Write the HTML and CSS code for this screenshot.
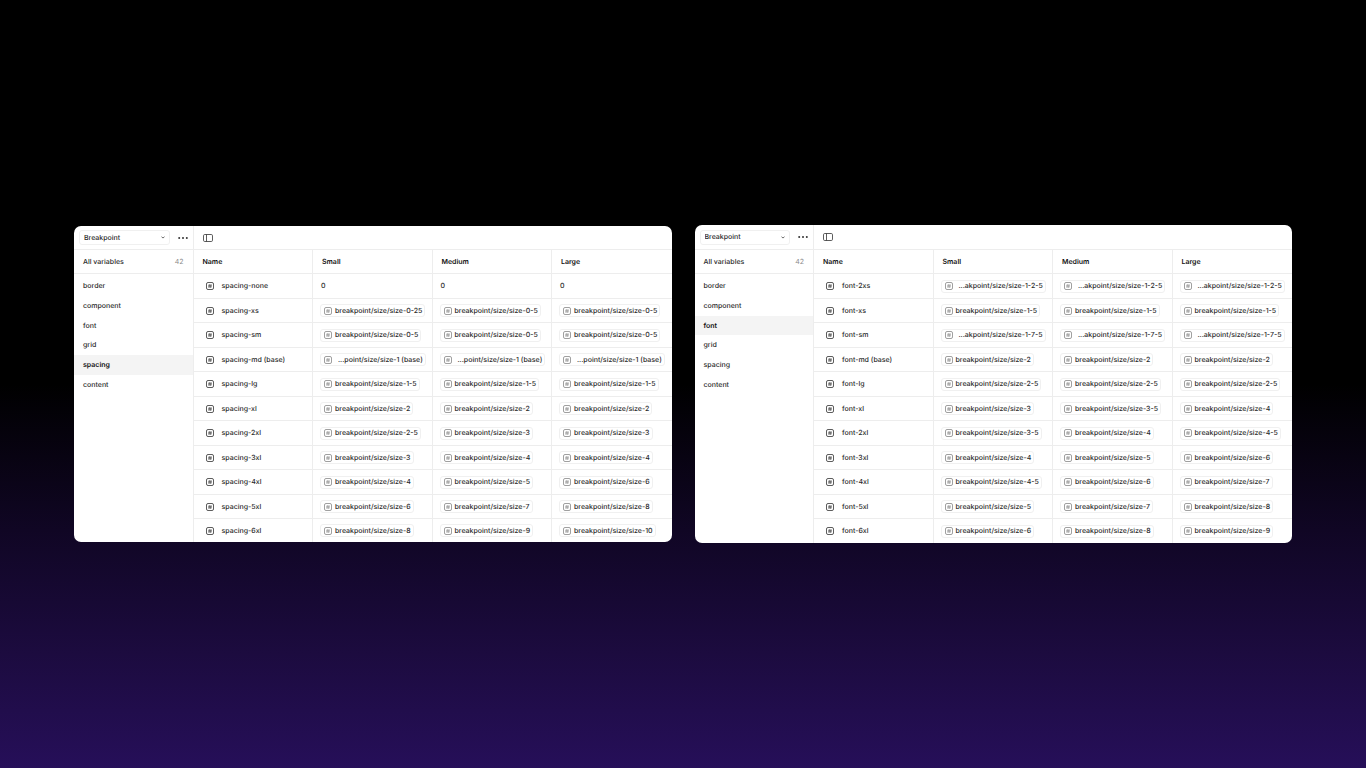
FILE: index.html
```html
<!DOCTYPE html>
<html lang="en">
<head>
    <meta charset="UTF-8">
    <meta name="viewport" content="width=device-width, initial-scale=1.0">
    <title>Breakpoint variables</title>
    <link rel="stylesheet" href="styles.css">
</head>
<body>
    <svg class="sprite" aria-hidden="true">
        <symbol id="icon-number" viewBox="0 0 16 16">
            <rect x="1" y="1" width="14" height="14" rx="3" fill="none" stroke="currentColor" stroke-width="1.6"/>
            <path d="M6.8 4.4L6 11.6M10 4.4L9.2 11.6M4.4 6.6h7.2M4.4 9.6h7.2" fill="none" stroke="currentColor" stroke-width="1.2"/>
        </symbol>
        <symbol id="icon-sidebar" viewBox="0 0 20 16">
            <rect x="1" y="1" width="18" height="14" rx="2.5" fill="none" stroke="currentColor" stroke-width="1.6"/>
            <path d="M7 1v14" stroke="currentColor" stroke-width="1.6"/>
        </symbol>
        <symbol id="icon-more" viewBox="0 0 20 4">
            <circle cx="2.4" cy="2" r="2" fill="currentColor"/>
            <circle cx="10" cy="2" r="2" fill="currentColor"/>
            <circle cx="17.6" cy="2" r="2" fill="currentColor"/>
        </symbol>
        <symbol id="icon-caret" viewBox="0 0 8 6">
            <path d="M1 1.5l3 2.5 3-2.5" fill="none" stroke="currentColor" stroke-width="1.4"/>
        </symbol>
    </svg>

    <main class="panels">
        <section class="panel" data-group="spacing">
            <aside class="sidebar">
                <div class="toolbar">
                    <div class="collection">
                        <select aria-label="Collection"><option>Breakpoint</option></select>
                        <svg class="caret"><use href="#icon-caret"/></svg>
                    </div>
                    <button class="more" aria-label="More options"><svg><use href="#icon-more"/></svg></button>
                </div>
                <a class="all" href="#">All variables <span>42</span></a>
                <nav class="groups">
                    <a href="#">border</a>
                    <a href="#">component</a>
                    <a href="#">font</a>
                    <a href="#">grid</a>
                    <a href="#" class="active">spacing</a>
                    <a href="#">content</a>
                </nav>
            </aside>
            <div class="content">
                <div class="toolbar">
                    <button class="toggle" aria-label="Toggle sidebar"><svg><use href="#icon-sidebar"/></svg></button>
                </div>
                <table>
                    <thead>
                        <tr><th>Name</th><th>Small</th><th>Medium</th><th>Large</th></tr>
                    </thead>
                    <tbody></tbody>
                </table>
            </div>
        </section>

        <section class="panel panel-tall" data-group="font">
            <aside class="sidebar">
                <div class="toolbar">
                    <div class="collection">
                        <select aria-label="Collection"><option>Breakpoint</option></select>
                        <svg class="caret"><use href="#icon-caret"/></svg>
                    </div>
                    <button class="more" aria-label="More options"><svg><use href="#icon-more"/></svg></button>
                </div>
                <a class="all" href="#">All variables <span>42</span></a>
                <nav class="groups">
                    <a href="#">border</a>
                    <a href="#">component</a>
                    <a href="#" class="active">font</a>
                    <a href="#">grid</a>
                    <a href="#">spacing</a>
                    <a href="#">content</a>
                </nav>
            </aside>
            <div class="content">
                <div class="toolbar">
                    <button class="toggle" aria-label="Toggle sidebar"><svg><use href="#icon-sidebar"/></svg></button>
                </div>
                <table>
                    <thead>
                        <tr><th>Name</th><th>Small</th><th>Medium</th><th>Large</th></tr>
                    </thead>
                    <tbody></tbody>
                </table>
            </div>
        </section>
    </main>

    <script>
        // name, small, medium, large
        const variables = {
            spacing: [
                ['none', '0', '0', '0'],
                ['xs', 'size-0-25', 'size-0-5', 'size-0-5'],
                ['sm', 'size-0-5', 'size-0-5', 'size-0-5'],
                ['md (base)', '...point/size/size-1 (base)', '...point/size/size-1 (base)', '...point/size/size-1 (base)'],
                ['lg', 'size-1-5', 'size-1-5', 'size-1-5'],
                ['xl', 'size-2', 'size-2', 'size-2'],
                ['2xl', 'size-2-5', 'size-3', 'size-3'],
                ['3xl', 'size-3', 'size-4', 'size-4'],
                ['4xl', 'size-4', 'size-5', 'size-6'],
                ['5xl', 'size-6', 'size-7', 'size-8'],
                ['6xl', 'size-8', 'size-9', 'size-10']
            ],
            font: [
                ['2xs', '...akpoint/size/size-1-2-5', '...akpoint/size/size-1-2-5', '...akpoint/size/size-1-2-5'],
                ['xs', 'size-1-5', 'size-1-5', 'size-1-5'],
                ['sm', '...akpoint/size/size-1-7-5', '...akpoint/size/size-1-7-5', '...akpoint/size/size-1-7-5'],
                ['md (base)', 'size-2', 'size-2', 'size-2'],
                ['lg', 'size-2-5', 'size-2-5', 'size-2-5'],
                ['xl', 'size-3', 'size-3-5', 'size-4'],
                ['2xl', 'size-3-5', 'size-4', 'size-4-5'],
                ['3xl', 'size-4', 'size-5', 'size-6'],
                ['4xl', 'size-4-5', 'size-6', 'size-7'],
                ['5xl', 'size-5', 'size-7', 'size-8'],
                ['6xl', 'size-6', 'size-8', 'size-9']
            ]
        };
        const icon = '<svg class="icon"><use href="#icon-number"/></svg>';

        function valueCell(value) {
            if (value === '0') return '<td><span class="plain">0</span></td>';
            if (value.startsWith('...')) return `<td><span class="alias">${icon}<span class="cut">${value}</span></span></td>`;
            return `<td><span class="alias">${icon}<span>breakpoint/size/${value}</span></span></td>`;
        }

        document.querySelectorAll('.panel').forEach(panel => {
            const group = panel.dataset.group;
            panel.querySelector('tbody').innerHTML = variables[group].map(([name, ...values]) =>
                `<tr><td><span class="name">${icon}${group}-${name}</span></td>${values.map(valueCell).join('')}</tr>`
            ).join('');
        });
    </script>
</body>
</html>
```
FILE: styles.css
```css
* {
    box-sizing: border-box;
}
body {
    margin: 0;
    min-height: 100vh;
    display: flex;
    align-items: center;
    padding: 0 74px;
    background: linear-gradient(#000 0%, #000 50%, #100624 69%, #1c0b3f 85%, #260f59 100%);
    font-family: Inter, "Liberation Sans", sans-serif;
    font-size: 7px;
    font-weight: 500;
    line-height: 10px;
    text-rendering: geometricPrecision;
    color: #2a2a2a;
}
a {
    color: inherit;
    text-decoration: none;
}
button {
    display: flex;
    padding: 0;
    border: 0;
    background: none;
    color: #333;
    cursor: pointer;
}
.sprite {
    position: absolute;
    width: 0;
    height: 0;
}
.panels {
    flex: 1;
    display: flex;
    align-items: center;
    gap: 23px;
}
.panel {
    flex: 1;
    min-width: 0;
    display: flex;
    overflow: hidden;
    background: #fff;
    border-radius: 7px;
}
.sidebar {
    width: 20%;
    border-right: 1px solid #ededed;
}
.content {
    flex: 1;
    min-width: 0;
}
.toolbar {
    display: flex;
    align-items: center;
    gap: 8px;
    height: 24px;
    padding: 0 5px;
    border-bottom: 1px solid #ededed;
}
.content .toolbar {
    padding: 0 9px;
}

/* collection picker */
.collection {
    position: relative;
    flex: 1;
    display: flex;
}
.collection select {
    width: 100%;
    height: 15px;
    padding: 0 4px;
    appearance: none;
    border: 1px solid #f0f0f0;
    border-radius: 3px;
    background: #fff;
    font: inherit;
    color: inherit;
    text-rendering: inherit;
}
.caret {
    position: absolute;
    right: 5px;
    top: 6px;
    width: 4px;
    height: 3px;
    pointer-events: none;
}
.more svg {
    width: 10px;
    height: 2px;
}
.toggle svg {
    width: 10px;
    height: 8px;
}

/* sidebar list */
.all {
    display: flex;
    align-items: center;
    justify-content: space-between;
    height: 24px;
    padding: 1px 9px 0;
    border-bottom: 1px solid #ededed;
}
.all span {
    color: #8c8c8c;
    font-weight: 400;
}
.groups {
    padding-top: 2px;
}
.groups a {
    display: flex;
    align-items: center;
    height: 20px;
    padding: 0 9px;
}
.groups a:nth-child(3n) {
    height: 19px;
}
.groups .active {
    background: #f4f4f4;
    font-weight: 600;
    color: #111;
}

/* variables table */
table {
    width: 100%;
    table-layout: fixed;
    border-collapse: separate;
    border-spacing: 0;
}
th, td {
    height: 24px;
    padding: 0 7px;
    text-align: left;
    vertical-align: middle;
    white-space: nowrap;
    border-right: 1px solid #ededed;
    border-bottom: 1px solid #ededed;
}
th {
    padding: 0 9px;
    font-weight: 600;
    color: #111;
}
th:last-child, td:last-child {
    border-right: 0;
}
tbody tr:nth-child(odd) td {
    height: 25px;
}
tbody tr:last-child td {
    height: 23px;
    border-bottom: 0;
}
.panel-tall .toolbar {
    height: 25px;
}
.panel-tall tbody tr:last-child td {
    height: 24px;
}
.name {
    display: flex;
    align-items: center;
    gap: 8px;
    padding-left: 5px;
}
.icon {
    flex: none;
    width: 8px;
    height: 8px;
    color: #333;
}
.plain {
    padding-left: 1px;
}
.alias {
    display: inline-flex;
    align-items: center;
    gap: 3px;
    height: 13px;
    padding: 0 2px 0 3px;
    border: 1px solid #f0f0f0;
    border-radius: 3px;
    vertical-align: middle;
}
.alias .icon {
    color: #888;
}
.cut {
    padding-left: 3px;
}
```
